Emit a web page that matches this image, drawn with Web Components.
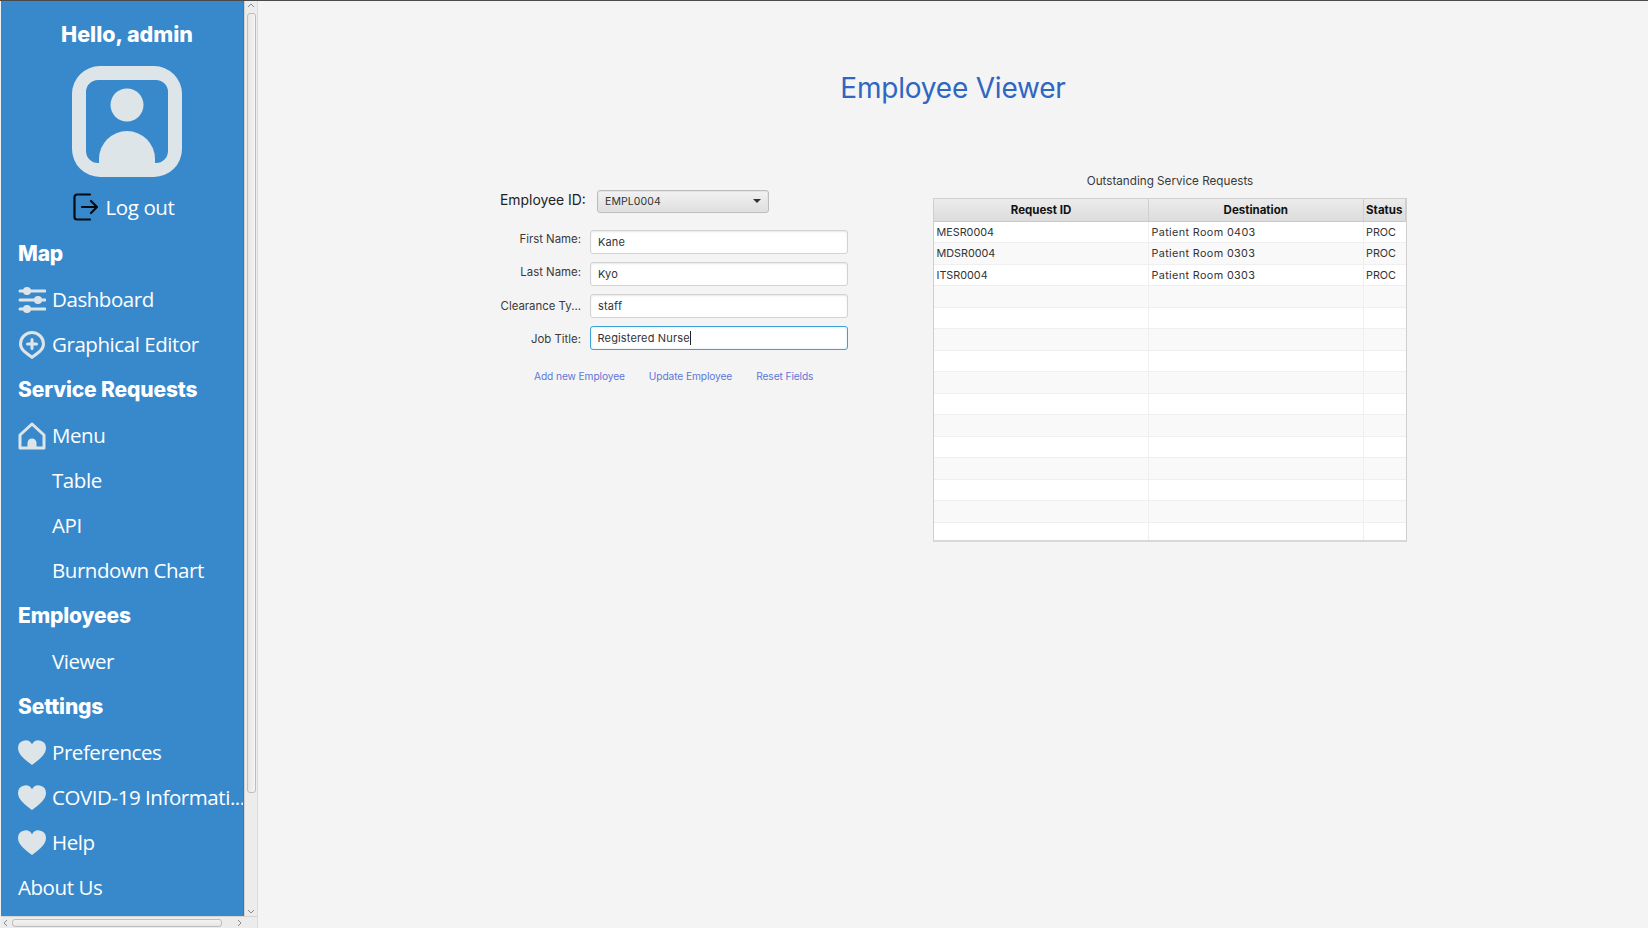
<!DOCTYPE html>
<html lang="en"><head><meta charset="utf-8"><title>Employee Viewer</title>
<style>
html,body{margin:0;height:928px;overflow:hidden;background:#f4f4f4}
body{font-family:"Inter","Liberation Sans",sans-serif}
app-shell{height:928px}
</style></head><body>
<app-shell>
  <side-panel slot="side">
    <greet-head></greet-head>
    <nav-head>Map</nav-head>
    <nav-item icon="sliders">Dashboard</nav-item>
    <nav-item icon="pin">Graphical Editor</nav-item>
    <nav-head>Service Requests</nav-head>
    <nav-item icon="house">Menu</nav-item>
    <nav-item icon="blank">Table</nav-item>
    <nav-item icon="blank">API</nav-item>
    <nav-item icon="blank">Burndown Chart</nav-item>
    <nav-head>Employees</nav-head>
    <nav-item icon="blank">Viewer</nav-item>
    <nav-head>Settings</nav-head>
    <nav-item icon="heart">Preferences</nav-item>
    <nav-item icon="heart">COVID-19 Informati...</nav-item>
    <nav-item icon="heart">Help</nav-item>
    <nav-item>About Us</nav-item>
  </side-panel>
  <viewer-page>
    <employee-form slot="form"></employee-form>
    <request-table slot="table"></request-table>
  </viewer-page>
</app-shell>
<script>
const def=(name,html,init)=>{customElements.define(name,class extends HTMLElement{
  constructor(){super();this.attachShadow({mode:'open'}).innerHTML=html;}
  connectedCallback(){if(init)init(this);}
});};
def('app-shell',`<style>
:host{display:flex;flex-direction:column;background:#f4f4f4}
.top{height:1px;background:#4a4a4a;flex:none}
.row{display:flex;flex:1;min-height:0}
</style><div class="top"></div><div class="row"><slot name="side"></slot><slot></slot></div>`);

def('side-panel',`<style>
:host{display:grid;grid-template-columns:243px 14px;grid-template-rows:915px 12px;width:258px;flex:none;background:#f0f0f0;box-sizing:border-box;padding-left:1px}
.body{background:#3889cc;overflow:hidden;padding-left:17px;box-sizing:border-box;border-right:1px solid #2f7dbd}
.v{background:#ececec;border-left:1px solid #d2d2d2;border-right:1px solid #dcdcdc;display:flex;flex-direction:column;align-items:center;box-sizing:border-box}
.v i{display:block;width:9px;height:780px;margin-top:3px;background:linear-gradient(90deg,#e6e6e6,#f4f4f4);border:1px solid #bdbdbd;border-radius:3px;box-sizing:border-box}
.a{height:9px;flex:none;display:flex;align-items:center;justify-content:center}
.h{background:#ececec;display:flex;align-items:center;grid-column:1/3;box-sizing:border-box;border-top:1px solid #d5d5d5;border-right:1px solid #dcdcdc}
.h i{display:block;width:210px;height:8px;background:linear-gradient(#f4f4f4,#e6e6e6);border:1px solid #bdbdbd;border-radius:3px;box-sizing:border-box;margin:0 0 0 2px}
.h .a{width:9px;height:auto}
.sp{flex:1}
svg{display:block}
</style><div class="body"><slot></slot></div>
<div class="v"><div class="a"><svg width="8" height="5" viewBox="0 0 8 5"><path d="M1 4l3-3 3 3" fill="none" stroke="#8a8a8a"/></svg></div><i></i><div class="sp"></div><div class="a"><svg width="8" height="5" viewBox="0 0 8 5"><path d="M1 1l3 3 3-3" fill="none" stroke="#8a8a8a"/></svg></div></div>
<div class="h"><div class="a"><svg width="5" height="8" viewBox="0 0 5 8"><path d="M4 1L1 4l3 3" fill="none" stroke="#8a8a8a"/></svg></div><i></i><div class="sp"></div><div class="a" style="margin-right:13px"><svg width="5" height="8" viewBox="0 0 5 8"><path d="M1 1l3 3-3 3" fill="none" stroke="#8a8a8a"/></svg></div></div>`);

def('greet-head',`<style>
:host{display:flex;flex-direction:column;align-items:center;width:218px;color:#fff;padding-bottom:7px}
h2{margin:0;font:800 21.500px/26px "Inter","Liberation Sans",sans-serif;padding-top:20px;color:#fff;white-space:nowrap}
.av{margin-top:19px;display:block}
.out{display:flex;align-items:center;gap:8px;height:34px;margin:13px 7px 0 0;font:20.500px/34px "Open Sans","Noto Sans",sans-serif;letter-spacing:-.4px;white-space:nowrap}
</style><h2>Hello, admin</h2>
<svg class="av" width="110" height="111" viewBox="0 0 110 111"><path fill="#dee5e8" fill-rule="evenodd" d="M28 0h54a28 28 0 0 1 28 28v55a28 28 0 0 1-28 28H28A28 28 0 0 1 0 83V28A28 28 0 0 1 28 0zM26 14a12 12 0 0 0-12 12v59a12 12 0 0 0 12 12h58a12 12 0 0 0 12-12V26a12 12 0 0 0-12-12z"/><circle cx="55" cy="39" r="16.500" fill="#dee5e8"/><path fill="#dee5e8" d="M27 97v-4a28 28 0 0 1 56 0v4z"/></svg>
<div class="out"><svg width="25" height="28" viewBox="0 0 25 28" fill="none" stroke="#050a10" stroke-width="2.200" stroke-linecap="round" stroke-linejoin="round"><path d="M17 1.500H4A2.500 2.500 0 0 0 1.500 4v20A2.500 2.500 0 0 0 4 26.500h13"/><path d="M9 14h15M18 8l6 6-6 6"/></svg><span>Log out</span></div>`);

def('nav-head',`<style>
:host{display:block;height:46px;color:#fff;font:800 21px/46px "Inter","Liberation Sans",sans-serif;white-space:nowrap;letter-spacing:-.15px}
</style><slot></slot>`);

const ICONS={
 sliders:`<svg width="28" height="28" viewBox="0 0 28 28"><g stroke="#dee5e8" stroke-width="3" stroke-linecap="round"><path d="M2 5h25M2 14h25M2 23h25"/></g><g fill="#dee5e8"><circle cx="9" cy="5" r="4"/><circle cx="20" cy="14" r="4"/><circle cx="9" cy="23" r="4"/></g></svg>`,
 pin:`<svg width="28" height="28" viewBox="0 0 28 28"><path fill="none" stroke="#dee5e8" stroke-width="3" d="M14 26.200C8 22 2.500 18.500 2.500 13A11.500 11.500 0 0 1 25.500 13C25.500 18.500 20 22 14 26.200z"/><path stroke="#dee5e8" stroke-width="3" stroke-linecap="round" d="M14 8.500v9M9.500 13h9"/></svg>`,
 house:`<svg width="28" height="28" viewBox="0 0 28 28"><path fill="none" stroke="#dee5e8" stroke-width="3" stroke-linejoin="round" d="M14 2L2 13v13h24V13z"/><path fill="#dee5e8" d="M9.500 27v-6a4.500 4.500 0 0 1 9 0v6z"/></svg>`,
 heart:`<svg width="28" height="26" viewBox="0 0 28 26"><path fill="#dee5e8" d="M14 25C9 21 0 15.500 0 8A7.500 7.500 0 0 1 14 4.200A7.500 7.500 0 0 1 28 8C28 15.500 19 21 14 25z"/></svg>`,
 blank:``};
def('nav-item',`<style>
:host{display:flex;align-items:center;height:45px;color:#fff;font:20.500px/45px "Open Sans","Noto Sans",sans-serif;white-space:nowrap;letter-spacing:-.44px}
.ic{flex:none;width:34px;display:flex;align-items:center}
.ic:empty{display:none}
.ic.b{display:block;height:1px}
</style><span class="ic"></span><slot></slot>`,el=>{
  const k=el.getAttribute('icon');const s=el.shadowRoot.querySelector('.ic');
  if(k==='blank')s.className='ic b'; else if(k) s.innerHTML=ICONS[k];
});

def('viewer-page',`<style>
:host{display:block;flex:1;min-width:0;background:#f4f4f4}
h1{margin:0;padding-top:68px;height:47px;font:400 28px/38px "Inter","Liberation Sans",sans-serif;color:#2e66c1;text-align:center;letter-spacing:-.2px}
.row{display:flex;align-items:flex-start;padding:55px 0 0 242px;gap:86px}
</style><h1>Employee Viewer</h1><div class="row"><slot name="form"></slot><slot name="table"></slot></div>`);

def('employee-form',`<style>
:host{display:block;width:347px;padding-top:18px;font-family:"Inter","Liberation Sans",sans-serif;color:#333}
.id{display:flex;align-items:center;gap:11px;height:24px}
.id label{font-size:13.900px;color:#222;white-space:nowrap;width:86px;padding-bottom:2px}
.combo{width:172px;height:23px;box-sizing:border-box;border:1px solid #bcbcbc;border-radius:3px;background:linear-gradient(#f2f2f2,#dedede);box-shadow:0 0 0 1px #e4e4e4 inset;display:flex;align-items:center;justify-content:space-between;padding:0 7px;font-size:10.500px;color:#333;letter-spacing:.1px}
.combo b{width:0;height:0;border:4px solid transparent;border-top:4px solid #333;border-bottom:0}
.grid{display:grid;grid-template-columns:81px 258px;column-gap:9px;row-gap:8.200px;margin-top:17px;align-items:center}
.grid label{font-size:11.400px;text-align:right;white-space:nowrap;color:#3a3a3a}
.grid label.a{padding-bottom:6px}
.grid label.b{padding-bottom:3px}
.grid label.c{padding-top:1px}
.grid label.d{padding-top:3px}
.f{height:23.800px;box-sizing:border-box;border:1px solid #d2d2d2;border-radius:3px;background:#fff;box-shadow:inset 0 1px 2px #e6e6e6;padding-left:7px;font-size:11px;line-height:22px;color:#333;letter-spacing:.15px;display:flex;align-items:center}
.f.on{border:1.500px solid #3ea0d8;box-shadow:inset 0 0 3px #d5ecf8;padding-left:6.500px}
.f u{display:inline-block;width:1px;height:14px;background:#222}
.acts{display:flex;gap:24px;margin:19px 0 0 34px;font-size:10.200px;color:#5d77d8;line-height:14px;white-space:nowrap;letter-spacing:-.1px}
</style><div class="id"><label>Employee ID:</label><div class="combo"><span>EMPL0004</span><b></b></div></div>
<div class="grid">
<label class="a">First Name:</label><div class="f">Kane</div>
<label class="b">Last Name:</label><div class="f">Kyo</div>
<label class="c">Clearance Ty...</label><div class="f">staff</div>
<label class="d">Job Title:</label><div class="f on">Registered Nurse<u></u></div>
</div>
<div class="acts"><span>Add new Employee</span><span>Update Employee</span><span>Reset Fields</span></div>`);

def('request-table',`<style>
:host{display:block;width:474px;font-family:"Inter","Liberation Sans",sans-serif}
.cap{text-align:center;font-size:11.700px;line-height:16px;color:#3a3a3a;margin-top:2px;height:17px}
.t{margin-top:8px;border:1px solid #cfcfcf;border-bottom:2px solid #d8d8d8;background:#fff;height:344px;box-sizing:border-box;overflow:hidden}
.r{display:grid;grid-template-columns:215px 214.500px 1fr;height:21.470px;box-sizing:border-box;border-bottom:1px solid #efefef;font-size:10.800px;line-height:21px;color:#333}
.r>*{border-right:1px solid #efefef;padding-left:2.500px;white-space:nowrap;overflow:hidden}
.r>*:last-child{border-right:0}
.r>*:nth-child(2){letter-spacing:.37px}
.r:nth-child(odd){background:#f9f9f9}
.r.hd{height:23px;background:linear-gradient(#ececec,#dcdcdc);border-bottom:1px solid #c9c9c9;font-weight:700;color:#111;font-size:11.500px;line-height:23px}
.r.hd>*{text-align:center;padding:0;border-right:1px solid #cfcfcf;letter-spacing:0}
</style><div class="cap">Outstanding Service Requests</div><div class="t"></div>`,el=>{
  const t=el.shadowRoot.querySelector('.t');if(t.children.length)return;
  const d=[['MESR0004','Patient Room 0403','PROC'],['MDSR0004','Patient Room 0303','PROC'],['ITSR0004','Patient Room 0303','PROC']];
  let h='<div class="r hd"><div>Request ID</div><div>Destination</div><div>Status</div></div>';
  for(let i=0;i<15;i++){const c=d[i]||['','',''];h+=`<div class="r"><div>${c[0]}</div><div>${c[1]}</div><div>${c[2]}</div></div>`;}
  t.innerHTML=h;
});
</script></body></html>
